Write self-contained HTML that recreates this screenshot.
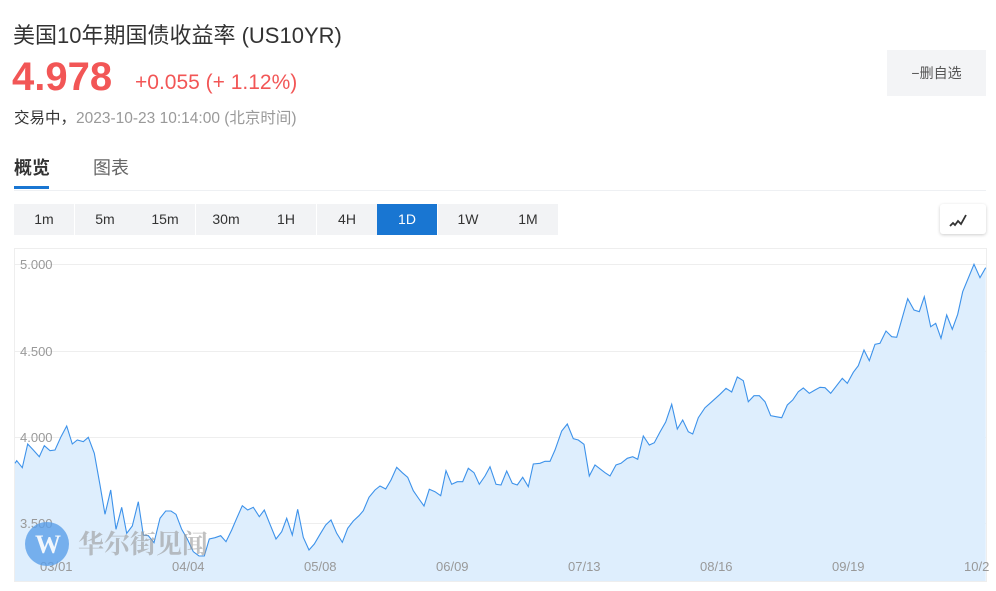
<!DOCTYPE html>
<html><head><meta charset="utf-8"><style>
body{margin:0;width:996px;height:591px;background:#fff;font-family:"Liberation Sans","Noto Sans CJK SC",sans-serif;position:relative;overflow:hidden}
.a{position:absolute;white-space:nowrap}
.btn{position:absolute;top:204px;height:31px;width:60px;background:#f2f3f5;color:#333;font-size:14px;line-height:31px;text-align:center}
</style></head><body>
<div class="a" style="left:13px;top:18px;font-size:22px;color:#333">美国10年期国债收益率&nbsp;(US10YR)</div>
<div class="a" style="left:12px;top:55px;font-size:40px;font-weight:bold;color:#f25656">4.978</div>
<div class="a" style="left:135px;top:71px;font-size:21px;color:#f25656">+0.055 (+ 1.12%)</div>
<div class="a" style="left:14px;top:106px;font-size:15.5px;color:#333">交易中，<span style="color:#999">2023-10-23 10:14:00 (北京时间)</span></div>
<div class="a" style="left:887px;top:50px;width:99px;height:46px;background:#f3f4f6;font-size:14px;color:#555;line-height:46px;text-align:center">−删自选</div>
<div class="a" style="left:14px;top:154px;font-size:18px;font-weight:bold;color:#333">概览</div>
<div class="a" style="left:93px;top:154px;font-size:18px;color:#666">图表</div>
<div class="a" style="left:14px;top:186px;width:35px;height:3px;background:#1976d2"></div>
<div class="a" style="left:14px;top:190px;width:972px;height:1px;background:#eef0f3"></div>
<div class="btn" style="left:14px">1m</div>
<div class="btn" style="left:75px">5m</div>
<div class="btn" style="left:135px">15m</div>
<div class="btn" style="left:196px">30m</div>
<div class="btn" style="left:256px">1H</div>
<div class="btn" style="left:317px">4H</div>
<div class="btn" style="left:377px;background:#1976d2;color:#fff">1D</div>
<div class="btn" style="left:438px">1W</div>
<div class="btn" style="left:498px">1M</div>
<div class="a" style="left:940px;top:204px;width:46px;height:30px;background:#fff;border-radius:3px;box-shadow:0 1px 3px rgba(0,0,0,.2)"><svg width="46" height="30"><path d="M10 22 L13 19 L15 21 L18 17 L21 20 L26 11" fill="none" stroke="#333" stroke-width="1.8"/></svg></div>
<svg class="a" style="left:0;top:0" width="996" height="591">
<rect x="14.5" y="248.5" width="972" height="333" fill="none" stroke="#eee"/>
<g stroke="#eee"><line x1="14" x2="986" y1="264.5" y2="264.5"/><line x1="14" x2="986" y1="351.5" y2="351.5"/><line x1="14" x2="986" y1="437.5" y2="437.5"/><line x1="14" x2="986" y1="523.5" y2="523.5"/></g>
<polygon fill="#deeefd" points="15,581 15,463.3 16.7,460.7 22.3,467.7 27.7,444 33.3,450 39.3,456.7 44.3,445.7 50,450.7 55,450 61,436.7 66.7,426 72.3,444 77.3,440 83.3,441.7 88.3,437.3 94.3,453.3 100,485 105,514.3 110.7,490 116,529.3 121.7,507.3 126.7,533.3 132.3,526 138.3,501.7 143.3,535 148.3,535.7 154,542.7 160,518.3 165.7,511 171,511 176,514.3 181.7,529.3 187.3,539 193.3,551.7 199,556 204.3,556 209.3,539 215,537.7 220.7,535.7 226,541.7 231.7,530 236.7,518.3 242.3,505.7 247.7,510 253.3,507.3 259.3,516.7 264.3,510 270,524.3 276,539 281.7,531.7 286.7,518.3 292.3,535 297.7,509.3 303.3,537.3 309,550 314.3,544 320,534.3 325.7,525 331,520 336.7,533.3 342.3,542.3 347.7,528.3 353.3,521 359,515.7 363.3,510.7 369,497.3 375,490 380,486 385.7,489 391,480 396.7,467.3 402.3,472.7 407.7,477.3 413.3,490.7 419,499 424,506 429.3,489.3 435,491.7 440.7,495.7 446,470.7 451.7,484.3 457.3,481.7 462.7,481.7 468.3,468.3 474,472.7 479.3,484.3 485,476 490,466.7 496,484.3 501,485 506.7,471 512.3,483.3 517.3,485 522.7,477.3 528.3,486.7 533.3,464 540,463.3 545,461.3 550,461.3 555,450 561.7,431 567.3,424 573.3,438.7 578.3,440 584,444.3 589.3,476 595,465 605,472.7 610,476 616,465 621,463.3 627.3,458.3 632.7,456.7 637.7,459.3 643.3,436 649.3,445 654.3,442.7 660,432 665.7,422 671.7,404.3 677.3,429 682.7,420 688.3,431.7 692.7,434 698.3,417.7 705,407.7 710,403.3 720,394.3 726,388.3 731.7,392 737.3,377 743.3,380.7 748.3,401.7 754,395.7 759.3,395.7 765,401.7 770.7,415.7 776,416.7 781.7,417.7 787.3,405 792.7,400 798.3,391.7 803.3,388 809.3,393.3 815,390 820,387.3 825,387.7 830.7,393.3 842.3,378.3 847.3,383.3 853.3,372.3 858.3,365.7 864,350 869.3,360.7 875,344.3 880,343.3 886,331 891.7,336.7 896.7,337.3 907.7,298.7 914,310 919.3,311.7 924.3,296.7 930.7,326.7 935.7,323.3 941,338.3 946.7,315 952.3,329.3 957.7,314.3 962.7,291.7 974,264.3 980,277.7 985.7,267.7 985.7,581"/>
<polyline fill="none" stroke="#3d92ea" stroke-width="1.1" points="15,463.3 16.7,460.7 22.3,467.7 27.7,444 33.3,450 39.3,456.7 44.3,445.7 50,450.7 55,450 61,436.7 66.7,426 72.3,444 77.3,440 83.3,441.7 88.3,437.3 94.3,453.3 100,485 105,514.3 110.7,490 116,529.3 121.7,507.3 126.7,533.3 132.3,526 138.3,501.7 143.3,535 148.3,535.7 154,542.7 160,518.3 165.7,511 171,511 176,514.3 181.7,529.3 187.3,539 193.3,551.7 199,556 204.3,556 209.3,539 215,537.7 220.7,535.7 226,541.7 231.7,530 236.7,518.3 242.3,505.7 247.7,510 253.3,507.3 259.3,516.7 264.3,510 270,524.3 276,539 281.7,531.7 286.7,518.3 292.3,535 297.7,509.3 303.3,537.3 309,550 314.3,544 320,534.3 325.7,525 331,520 336.7,533.3 342.3,542.3 347.7,528.3 353.3,521 359,515.7 363.3,510.7 369,497.3 375,490 380,486 385.7,489 391,480 396.7,467.3 402.3,472.7 407.7,477.3 413.3,490.7 419,499 424,506 429.3,489.3 435,491.7 440.7,495.7 446,470.7 451.7,484.3 457.3,481.7 462.7,481.7 468.3,468.3 474,472.7 479.3,484.3 485,476 490,466.7 496,484.3 501,485 506.7,471 512.3,483.3 517.3,485 522.7,477.3 528.3,486.7 533.3,464 540,463.3 545,461.3 550,461.3 555,450 561.7,431 567.3,424 573.3,438.7 578.3,440 584,444.3 589.3,476 595,465 605,472.7 610,476 616,465 621,463.3 627.3,458.3 632.7,456.7 637.7,459.3 643.3,436 649.3,445 654.3,442.7 660,432 665.7,422 671.7,404.3 677.3,429 682.7,420 688.3,431.7 692.7,434 698.3,417.7 705,407.7 710,403.3 720,394.3 726,388.3 731.7,392 737.3,377 743.3,380.7 748.3,401.7 754,395.7 759.3,395.7 765,401.7 770.7,415.7 776,416.7 781.7,417.7 787.3,405 792.7,400 798.3,391.7 803.3,388 809.3,393.3 815,390 820,387.3 825,387.7 830.7,393.3 842.3,378.3 847.3,383.3 853.3,372.3 858.3,365.7 864,350 869.3,360.7 875,344.3 880,343.3 886,331 891.7,336.7 896.7,337.3 907.7,298.7 914,310 919.3,311.7 924.3,296.7 930.7,326.7 935.7,323.3 941,338.3 946.7,315 952.3,329.3 957.7,314.3 962.7,291.7 974,264.3 980,277.7 985.7,267.7"/>
<g font-family="Liberation Sans,sans-serif" font-size="13" fill="#999">
<text x="20" y="269">5.000</text><text x="20" y="356">4.500</text><text x="20" y="442">4.000</text><text x="20" y="528">3.500</text>
<text x="40" y="571">03/01</text><text x="172" y="571">04/04</text><text x="304" y="571">05/08</text><text x="436" y="571">06/09</text><text x="568" y="571">07/13</text><text x="700" y="571">08/16</text><text x="832" y="571">09/19</text><text x="964" y="571">10/2</text>
</g>
<circle cx="47" cy="544" r="22" fill="#5a9fe8" opacity="0.8"/>
<text x="35" y="553" font-family="Liberation Serif,serif" font-size="26" font-weight="bold" fill="#fff" opacity="0.9">W</text>
<text x="78" y="553" font-family="Liberation Serif,'Noto Serif CJK SC',serif" font-size="26" font-weight="bold" fill="#999" opacity="0.6">华尔街见闻</text>
</svg>
</body></html>
